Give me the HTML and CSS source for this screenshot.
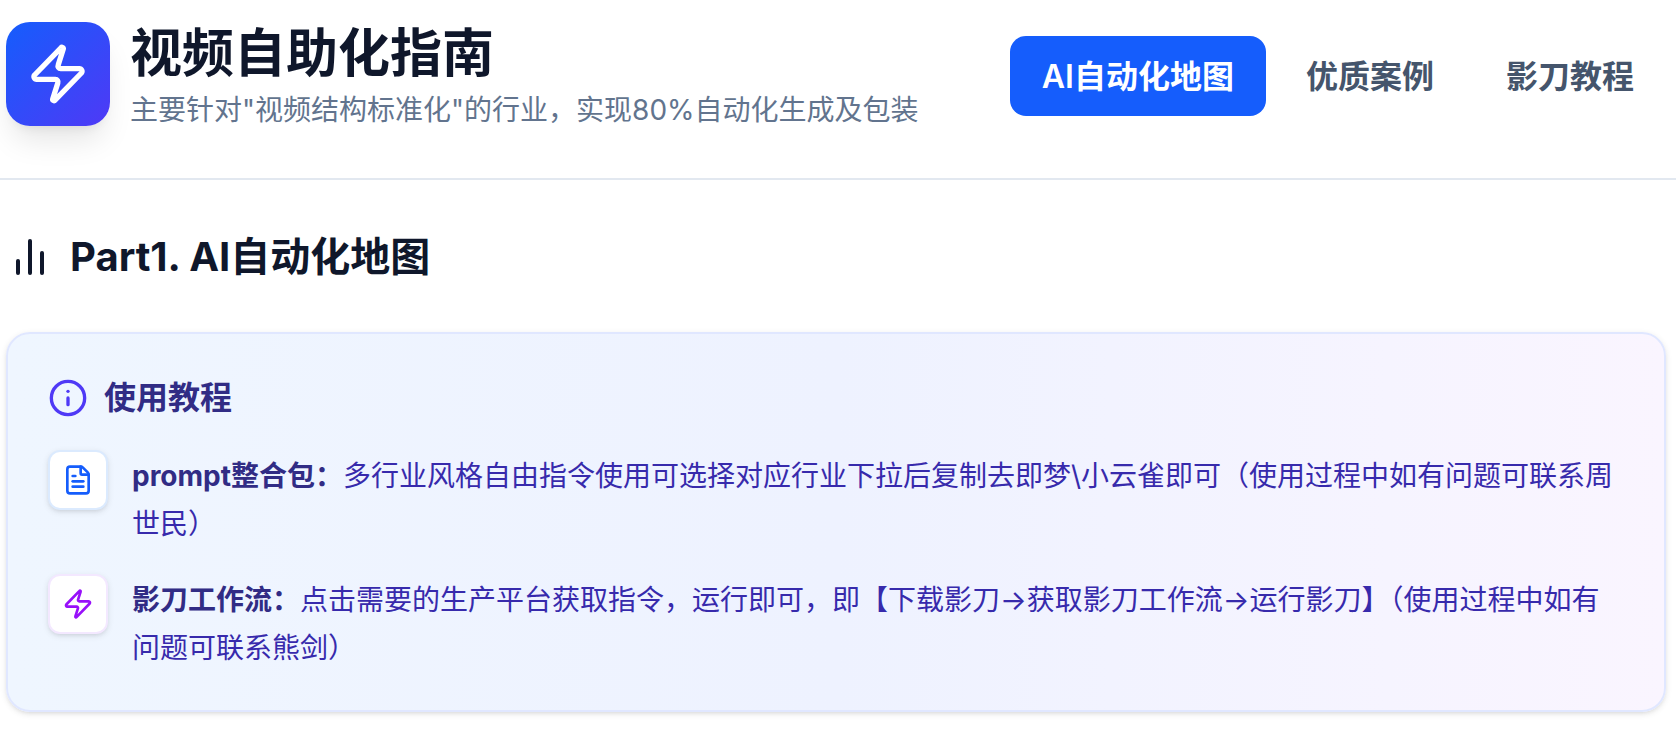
FILE: index.html
```html
<!DOCTYPE html>
<html lang="zh-CN">
<head>
  <meta charset="UTF-8">
  <meta name="viewport" content="width=device-width, initial-scale=1.0">
  <title>视频自助化指南</title>
  <link rel="stylesheet" href="styles.css">
</head>
<body>
  <header class="header">
    <div class="brand">
      <div class="logo">
        <svg class="icon" viewBox="0 0 24 24" width="64" height="64"><path d="M4 14a1 1 0 0 1-.78-1.63l9.9-10.2a.5.5 0 0 1 .86.46l-1.92 6.02A1 1 0 0 0 13 10h7a1 1 0 0 1 .78 1.63l-9.9 10.2a.5.5 0 0 1-.86-.46l1.92-6.02A1 1 0 0 0 11 14z"/></svg>
      </div>
      <div>
        <h1>视频自助化指南</h1>
        <p class="subtitle">主要针对"视频结构标准化"的行业，实现80%自动化生成及包装</p>
      </div>
    </div>
    <nav class="nav">
      <button type="button" class="active">AI自动化地图</button>
      <button type="button">优质案例</button>
      <button type="button">影刀教程</button>
    </nav>
  </header>

  <main>
    <h2>
      <svg class="icon" viewBox="0 0 24 24" width="48" height="48"><path d="M18 20V10"/><path d="M12 20V4"/><path d="M6 20v-6"/></svg>
      Part1. AI自动化地图
    </h2>

    <section class="guide">
      <h3>
        <svg class="icon" viewBox="0 0 24 24" width="40" height="40"><circle cx="12" cy="12" r="10"/><path d="M12 16v-4"/><path d="M12 8h.01"/></svg>
        使用教程
      </h3>
      <ul>
        <li>
          <span class="tile tile-blue">
            <svg class="icon" viewBox="0 0 24 24" width="32" height="32"><path d="M6 22a2 2 0 0 1-2-2V4a2 2 0 0 1 2-2h8a2.4 2.4 0 0 1 1.704.706l3.588 3.588A2.4 2.4 0 0 1 20 8v12a2 2 0 0 1-2 2z"/><path d="M14 2v5a1 1 0 0 0 1 1h5"/><path d="M10 9H8"/><path d="M16 13H8"/><path d="M16 17H8"/></svg>
          </span>
          <p><strong>prompt整合包：</strong>多行业风格自由指令使用可选择对应行业下拉后复制去即梦\小云雀即可（使用过程中如有问题可联系周世民）</p>
        </li>
        <li>
          <span class="tile tile-purple">
            <svg class="icon" viewBox="0 0 24 24" width="32" height="32"><path d="M4 14a1 1 0 0 1-.78-1.63l9.9-10.2a.5.5 0 0 1 .86.46l-1.92 6.02A1 1 0 0 0 13 10h7a1 1 0 0 1 .78 1.63l-9.9 10.2a.5.5 0 0 1-.86-.46l1.92-6.02A1 1 0 0 0 11 14z"/></svg>
          </span>
          <p><strong>影刀工作流：</strong>点击需要的生产平台获取指令，运行即可，即【下载影刀→获取影刀工作流→运行影刀】（使用过程中如有问题可联系熊剑）</p>
        </li>
      </ul>
    </section>
  </main>
</body>
</html>
```
FILE: styles.css
```css
* {
  box-sizing: border-box;
  margin: 0;
  padding: 0;
}
body {
  font-family: Inter, 'Noto Sans CJK SC', sans-serif;
  font-size: 28px;
  line-height: 48px;
  color: #0f172b;
  background-color: #fff;
}
.icon {
  display: block;
  flex-shrink: 0;
  fill: none;
  stroke: currentColor;
  stroke-width: 2;
  stroke-linecap: round;
  stroke-linejoin: round;
}

.header {
  display: flex;
  justify-content: space-between;
  align-items: flex-start;
  padding: 22px 10px 42px 6px;
  border-bottom: 2px solid #e2e8f0;
}
.brand {
  display: flex;
  align-items: flex-start;
  gap: 20px;
}
.logo {
  padding: 20px;
  color: #fff;
  background-image: linear-gradient(to bottom right, #155dfc, #4f39f6);
  border-radius: 24px;
  box-shadow: 0 20px 30px -6px rgba(0, 0, 0, 0.1), 0 8px 12px -8px rgba(0, 0, 0, 0.1);
}
h1 {
  font-size: 52px;
  line-height: 64px;
  font-weight: 700;
}
.subtitle {
  padding-bottom: 2px;
  color: #62748e;
}
.nav {
  display: flex;
  gap: 8px;
  padding-top: 14px;
}
.nav button {
  padding: 17px 32px 15px;
  font: inherit;
  font-size: 32px;
  font-weight: 600;
  color: #45556c;
  background: none;
  border: none;
  border-radius: 16px;
  cursor: pointer;
}
.nav button.active {
  color: #fff;
  background-color: #155dfc;
}

main {
  padding: 48px 10px 18px 6px;
}
h2 {
  display: flex;
  align-items: center;
  gap: 16px;
  margin-bottom: 46px;
  font-size: 40px;
  line-height: 58px;
  font-weight: 700;
}
.guide {
  padding: 40px 40px 38px;
  background-image: linear-gradient(to right, #eff6ff, #eef2ff, #faf5ff);
  border: 2px solid #e0e7ff;
  border-radius: 24px;
  box-shadow: 0 2px 6px rgba(0, 0, 0, 0.1), 0 2px 4px -2px rgba(0, 0, 0, 0.1);
}
h3 {
  display: flex;
  align-items: center;
  gap: 16px;
  margin-bottom: 28px;
  font-size: 32px;
  font-weight: 700;
  color: #312c85;
}
h3 .icon {
  color: #4f39f6;
}
ul {
  display: grid;
  gap: 26px;
  list-style: none;
}
li {
  display: flex;
  align-items: flex-start;
  gap: 24px;
  color: #372aac;
}
li p {
  padding-top: 2px;
}
strong {
  color: #312c85;
}
.tile {
  padding: 12px;
  background-color: #fff;
  border: 2px solid;
  border-radius: 12px;
  box-shadow: 0 2px 6px rgba(0, 0, 0, 0.1), 0 2px 4px -2px rgba(0, 0, 0, 0.1);
}
.tile-blue {
  border-color: #dbeafe;
}
.tile-blue .icon {
  color: #155dfc;
}
.tile-purple {
  border-color: #f3e8ff;
}
.tile-purple .icon {
  color: #9810fa;
}
```
